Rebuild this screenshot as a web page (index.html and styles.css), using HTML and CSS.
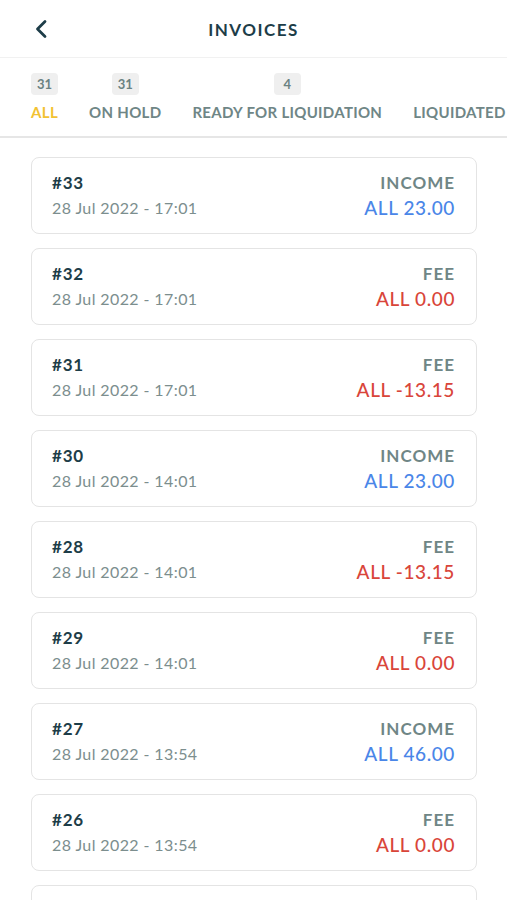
FILE: index.html
```html
<!DOCTYPE html>
<html lang="en">
<head>
    <meta charset="UTF-8">
    <meta name="viewport" content="width=device-width, initial-scale=1.0">
    <title>Invoices</title>
    <link rel="stylesheet" href="styles.css">
</head>
<body>
    <div class="header">
        <button class="back">
            <svg width="14" height="20" viewBox="0 0 14 20"><path d="M11 2.5 L3.5 10 L11 17.5" fill="none" stroke="#1d3d48" stroke-width="2.8" stroke-linecap="round" stroke-linejoin="round"/></svg>
        </button>
        <h1>INVOICES</h1>
    </div>
    <div class="tabs">
        <div class="tab active">
            <span class="badge">31</span>
            <span class="label">ALL</span>
        </div>
        <div class="tab">
            <span class="badge">31</span>
            <span class="label">ON HOLD</span>
        </div>
        <div class="tab">
            <span class="badge">4</span>
            <span class="label">READY FOR LIQUIDATION</span>
        </div>
        <div class="tab">
            <span class="badge empty"></span>
            <span class="label">LIQUIDATED</span>
        </div>
    </div>
    <div class="list">
        <div class="card">
            <div class="left"><p class="num">#33</p><p class="date">28 Jul 2022 - 17:01</p></div>
            <div class="right"><p class="type">INCOME</p><p class="amount income">ALL 23.00</p></div>
        </div>
        <div class="card">
            <div class="left"><p class="num">#32</p><p class="date">28 Jul 2022 - 17:01</p></div>
            <div class="right"><p class="type">FEE</p><p class="amount fee">ALL 0.00</p></div>
        </div>
        <div class="card">
            <div class="left"><p class="num">#31</p><p class="date">28 Jul 2022 - 17:01</p></div>
            <div class="right"><p class="type">FEE</p><p class="amount fee">ALL -13.15</p></div>
        </div>
        <div class="card">
            <div class="left"><p class="num">#30</p><p class="date">28 Jul 2022 - 14:01</p></div>
            <div class="right"><p class="type">INCOME</p><p class="amount income">ALL 23.00</p></div>
        </div>
        <div class="card">
            <div class="left"><p class="num">#28</p><p class="date">28 Jul 2022 - 14:01</p></div>
            <div class="right"><p class="type">FEE</p><p class="amount fee">ALL -13.15</p></div>
        </div>
        <div class="card">
            <div class="left"><p class="num">#29</p><p class="date">28 Jul 2022 - 14:01</p></div>
            <div class="right"><p class="type">FEE</p><p class="amount fee">ALL 0.00</p></div>
        </div>
        <div class="card">
            <div class="left"><p class="num">#27</p><p class="date">28 Jul 2022 - 13:54</p></div>
            <div class="right"><p class="type">INCOME</p><p class="amount income">ALL 46.00</p></div>
        </div>
        <div class="card">
            <div class="left"><p class="num">#26</p><p class="date">28 Jul 2022 - 13:54</p></div>
            <div class="right"><p class="type">FEE</p><p class="amount fee">ALL 0.00</p></div>
        </div>
        <div class="card partial"></div>
    </div>
</body>
</html>
```

FILE: styles.css
```css
body {
    font-family: Lato, "Noto Sans", sans-serif;
    background-color: #fff;
    color: #1d3d48;
    margin: 0;
    padding: 0;
    height: 900px;
    overflow: hidden;
}
p {
    margin: 0;
}
.header {
    position: relative;
    height: 57px;
    display: flex;
    align-items: center;
    justify-content: center;
    border-bottom: 1px solid #f1f1f1;
}
.back {
    position: absolute;
    left: 33px;
    top: 19px;
    background: none;
    border: none;
    padding: 0;
    width: 16px;
    height: 22px;
}
.header h1 {
    margin: 0 0 -2px 0;
    font-size: 17px;
    font-weight: 700;
    letter-spacing: 1.5px;
    color: #1d3d48;
}
.tabs {
    display: flex;
    gap: 31px;
    padding: 15px 0 0 31px;
    height: 63px;
    border-bottom: 2px solid #e6e6e6;
    white-space: nowrap;
    overflow: hidden;
}
.tab {
    display: flex;
    flex-direction: column;
    align-items: center;
}
.badge {
    height: 22px;
    min-width: 15px;
    padding: 0 6px;
    line-height: 22px;
    font-size: 13px;
    font-weight: 700;
    color: #6b8282;
    background: #efefef;
    border-radius: 4px;
    text-align: center;
}
.badge.empty {
    visibility: hidden;
}
.label {
    margin-top: 8px;
    font-size: 15px;
    font-weight: 700;
    color: #6f8686;
    letter-spacing: 0.3px;
}
.tab.active .label {
    color: #f2c233;
}
.list {
    padding: 19px 30px 0 31px;
}
.card {
    display: flex;
    justify-content: space-between;
    align-items: center;
    height: 74px;
    padding: 0 21px 1px 20px;
    margin-bottom: 14px;
    border: 1px solid #e4e4e4;
    border-radius: 8px;
}
.card.partial {
    height: 60px;
}
.num {
    font-size: 17px;
    font-weight: 700;
    color: #1d3d48;
    letter-spacing: 0.8px;
    line-height: 25px;
}
.date {
    font-size: 16px;
    color: #7c8e8e;
    letter-spacing: 0.4px;
    line-height: 25px;
}
.right {
    text-align: right;
}
.type {
    font-size: 17px;
    font-weight: 700;
    color: #6f8686;
    letter-spacing: 1px;
    line-height: 25px;
}
.amount {
    font-size: 19px;
    font-weight: 500;
    letter-spacing: 0.6px;
    line-height: 25px;
}
.amount.income {
    color: #4a86e8;
}
.amount.fee {
    color: #d9453a;
}
```
